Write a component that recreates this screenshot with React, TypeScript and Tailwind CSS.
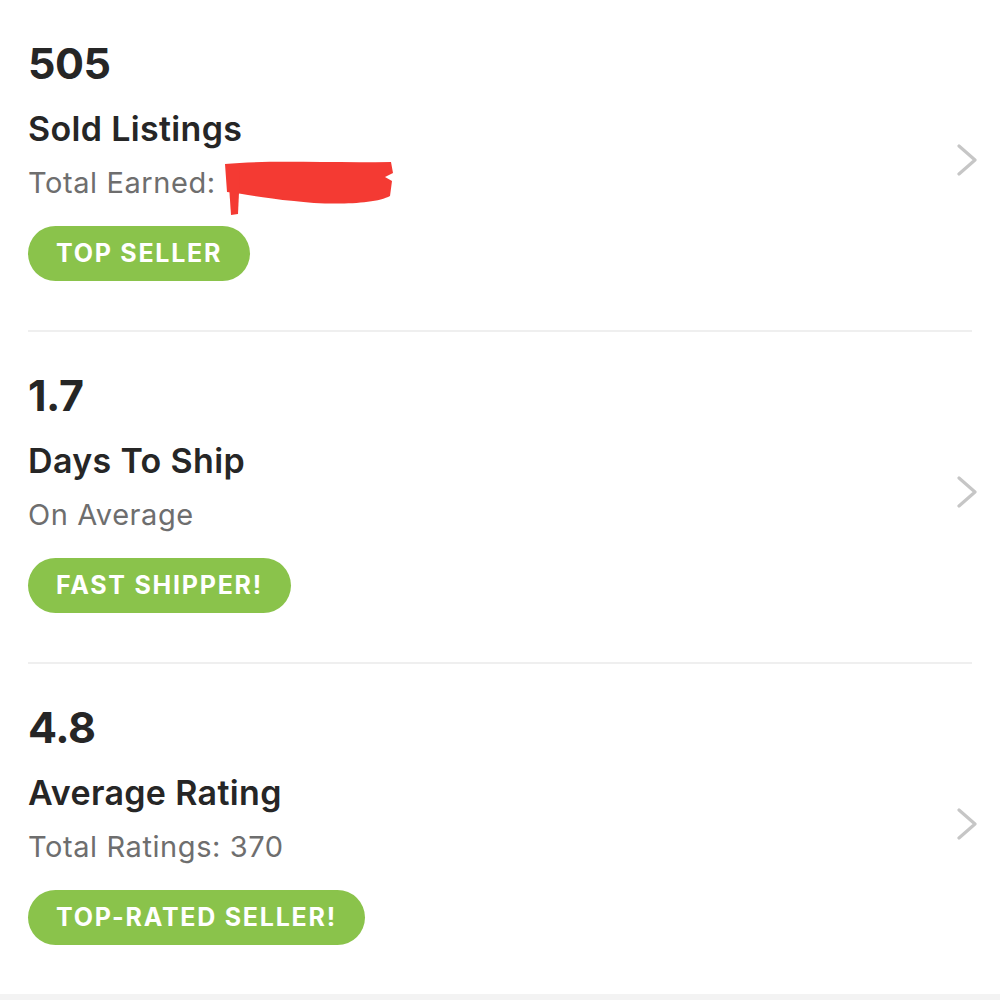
import React from "react";

type Stat = {
  value: string;
  title: string;
  subtitle: React.ReactNode;
  badge: string;
};

function Chevron() {
  return (
    <svg width="22" height="32" viewBox="0 0 22 32" className="-mr-[6px] shrink-0" fill="none">
      <polyline
        points="3,2 19,16 3,30"
        stroke="#c6c6c6"
        strokeWidth="3.2"
        strokeLinecap="round"
        strokeLinejoin="round"
      />
    </svg>
  );
}

// red marker scribble hiding the amount
function Scribble() {
  return (
    <svg width="172" height="64" viewBox="0 0 172 64" className="-my-[12px] overflow-visible">
      <path
        d="M1 13 C40 9, 100 12, 167 11 L169 22 L161 26 L168 30 L166 45 C150 54, 100 54, 70 50 C40 47, 20 43, 3 41 Z"
        fill="#f43a33"
      />
      <path d="M4 20 L16 20 L14 63 L7 64 Z" fill="#f43a33" />
    </svg>
  );
}

function StatRow({ stat, last }: { stat: Stat; last?: boolean }) {
  return (
    <div
      className={`mx-[28px] flex items-center justify-between pt-[38px] pb-[49px] ${
        last ? "" : "border-b-2 border-[#efefef]"
      }`}
    >
      <div className="flex flex-col">
        <div className="text-[43px] leading-[50px] font-bold text-[#262626] tracking-[-0.01em]">{stat.value}</div>
        <div className="mt-[19px] text-[34px] leading-[44px] font-semibold text-[#262626] tracking-[0.01em]">
          {stat.title}
        </div>
        <div className="mt-[12px] text-[29px] leading-[40px] text-[#6e6e6e] tracking-[0.02em]">{stat.subtitle}</div>
        <div className="mt-[23px] self-start h-[55px] px-[28px] rounded-full bg-[#8ac34b] flex items-center text-white text-[25px] font-bold tracking-[0.07em]">
          {stat.badge}
        </div>
      </div>
      <Chevron />
    </div>
  );
}

export default function App() {
  const stats: Stat[] = [
    {
      value: "505",
      title: "Sold Listings",
      subtitle: (
        <span className="flex items-center">
          Total Earned:&nbsp;
          <Scribble />
        </span>
      ),
      badge: "TOP SELLER",
    },
    { value: "1.7", title: "Days To Ship", subtitle: "On Average", badge: "FAST SHIPPER!" },
    { value: "4.8", title: "Average Rating", subtitle: "Total Ratings: 370", badge: "TOP-RATED SELLER!" },
  ];

  return (
    <div className="min-h-screen bg-[#f3f3f3]" style={{ fontFamily: "Inter, 'Noto Sans', sans-serif" }}>
      <div className="bg-white">
        {stats.map((s, i) => (
          <StatRow key={s.value} stat={s} last={i === stats.length - 1} />
        ))}
      </div>
    </div>
  );
}
